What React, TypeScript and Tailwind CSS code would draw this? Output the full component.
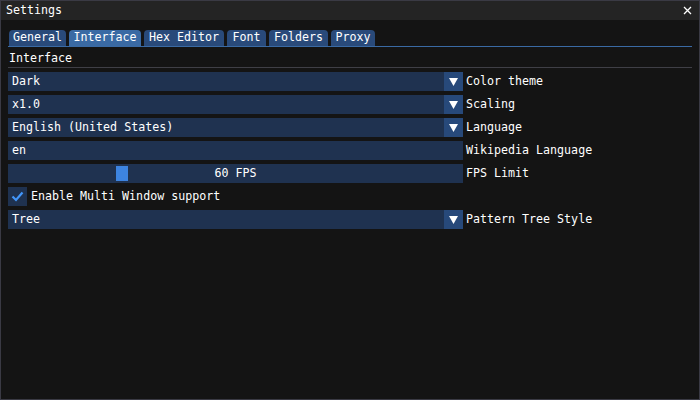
import React from "react";

const font = { fontFamily: '"DejaVu Sans Mono", "Liberation Mono", monospace' };

function Arrow() {
  return (
    <div className="w-[19px] h-[19px] bg-[#27497a] flex items-center justify-center shrink-0">
      <svg width="9" height="8" viewBox="0 0 9 8">
        <polygon points="0,0 9,0 4.5,8" fill="#ffffff" />
      </svg>
    </div>
  );
}

function Combo({ value, label }: { value: string; label: string }) {
  return (
    <div className="flex items-center h-[19px]">
      <div className="w-[455px] h-[19px] bg-[#1f3250] flex items-center">
        <div className="flex-1 pl-[4px] text-white leading-none">{value}</div>
        <Arrow />
      </div>
      <div className="ml-[3px] text-white leading-none">{label}</div>
    </div>
  );
}

export default function App() {
  const tabs = [
    { t: "General", w: "w-[57px]" },
    { t: "Interface", w: "w-[72px]" },
    { t: "Hex Editor", w: "w-[80px]" },
    { t: "Font", w: "w-[39px]" },
    { t: "Folders", w: "w-[59px]" },
    { t: "Proxy", w: "w-[44px]" },
  ];
  return (
    <div
      className="w-[700px] h-[400px] bg-[#141414] border border-[#3a3a44] flex flex-col text-[11.65px] text-white"
      style={font}
    >
      <div className="h-[19px] bg-[#242424] flex items-center justify-between pl-[5px] pr-[6px] shrink-0">
        <span className="leading-none">Settings</span>
        <svg width="9" height="9" viewBox="0 0 9 9" className="mr-[1px]">
          <path d="M1 1 L8 8 M8 1 L1 8" stroke="#ffffff" strokeWidth="1.3" />
        </svg>
      </div>
      <div className="px-[7px] pt-[10px] flex flex-col">
        <div className="flex items-end gap-[3px] h-[17px] pl-[1px] border-b border-[#3a6aa4]">
          {tabs.map(({ t, w }) => (
            <div
              key={t}
              className={
                (t === "Interface" ? "bg-[#3a6aa4] " : "bg-[#294a7a] ") +
                w +
                " h-[16px] rounded-t-[4px] flex items-center justify-center leading-none"
              }
            >
              {t}
            </div>
          ))}
        </div>
        <div className="h-[21px] pt-[3px] pl-[1px] flex items-center leading-none border-b border-[#3f3f46]">
          Interface
        </div>
        <div className="mt-[4px] flex flex-col gap-[4px]">
          <Combo value="Dark" label="Color theme" />
          <Combo value="x1.0" label="Scaling" />
          <Combo value="English (United States)" label="Language" />
          <div className="flex items-center h-[19px]">
            <div className="w-[455px] h-[19px] bg-[#1f3250] flex items-center pl-[4px] leading-none">en</div>
            <div className="ml-[3px] leading-none">Wikipedia Language</div>
          </div>
          <div className="flex items-center h-[19px]">
            <div className="relative w-[455px] h-[19px] bg-[#1f3250] flex items-center justify-center leading-none">
              <div className="absolute left-[108px] top-[2px] w-[12px] h-[15px] bg-[#3d84e0]" />
              <span className="relative">60 FPS</span>
            </div>
            <div className="ml-[3px] leading-none">FPS Limit</div>
          </div>
          <div className="flex items-center h-[19px]">
            <div className="w-[19px] h-[19px] bg-[#1f3250] flex items-center justify-center">
              <svg width="13" height="11" viewBox="0 0 13 11">
                <path d="M1.5 5.5 L5 9 L11.5 1.5" stroke="#4296fa" strokeWidth="2.2" fill="none" />
              </svg>
            </div>
            <div className="ml-[4px] leading-none">Enable Multi Window support</div>
          </div>
          <Combo value="Tree" label="Pattern Tree Style" />
        </div>
      </div>
    </div>
  );
}
